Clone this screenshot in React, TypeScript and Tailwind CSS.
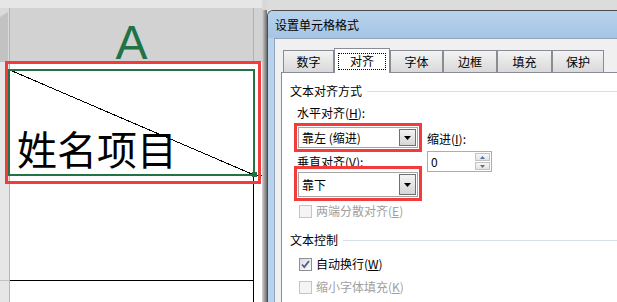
import React from "react";

const Tab = ({ label, w, active }: { label: string; w: string; active?: boolean }) =>
  active ? (
    <div className={`${w} h-[25px] bg-white border border-b-0 border-[#898c95] flex items-center justify-center`}>
      <span className="w-[48px] h-[17px] border border-dotted border-black flex items-center justify-center">{label}</span>
    </div>
  ) : (
    <div className={`${w} h-[23px] border border-[#898c95] bg-gradient-to-b from-[#f3f3f3] to-[#d9d9d9] flex items-center justify-center`}>
      {label}
    </div>
  );

const GroupHeader = ({ text, className }: { text: string; className?: string }) => (
  <div className={`flex items-center gap-[5px] ${className ?? ""}`}>
    <span>{text}</span>
    <div className="flex-1 h-px bg-[#d5dfe5]" />
  </div>
);

const DropButton = () => (
  <div className="w-[17px] h-full border border-[#707070] bg-gradient-to-b from-[#f4f4f4] to-[#d6d6d6] flex items-center justify-center">
    <svg width="7" height="4" viewBox="0 0 7 4">
      <path d="M0 0h7L3.5 4z" fill="#000" />
    </svg>
  </div>
);

const Select = ({ text, h }: { text: string; h: string }) => (
  <div className={`${h} bg-white border border-[#a5a5a5] flex items-center`}>
    <span className="flex-1 pl-[3px]">{text}</span>
    <div className="h-full py-px pr-px">
      <DropButton />
    </div>
  </div>
);

const Check = ({ checked, disabled }: { checked?: boolean; disabled?: boolean }) => (
  <div
    className={`w-[13px] h-[13px] shrink-0 border flex items-center justify-center ${
      disabled ? "border-[#c5c5c5] bg-[#f4f4f4]" : "border-[#8e8f8f] bg-gradient-to-br from-[#dedede] to-[#fafafa]"
    }`}
  >
    {checked && (
      <svg width="11" height="11" viewBox="0 0 11 11">
        <path d="M2 5.5 L4.3 8 L9 2" fill="none" stroke="#4a5d95" strokeWidth="1.8" />
      </svg>
    )}
  </div>
);

const SpinBtn = ({ up }: { up?: boolean }) => (
  <div className="flex-1 border border-[#c3c3c3] bg-gradient-to-b from-[#f7f7f7] to-[#e3e3e3] flex items-center justify-center">
    <svg width="5" height="3" viewBox="0 0 5 3">
      <path d={up ? "M0 3h5L2.5 0z" : "M0 0h5L2.5 3z"} fill="#5b6f9b" />
    </svg>
  </div>
);

export default function App() {
  return (
    <div className="w-[617px] h-[302px] overflow-hidden flex bg-[#e6e6e6] text-black font-[family-name:'Noto_Sans_CJK_SC',sans-serif]">
      {/* sheet */}
      <div className="w-[262px] shrink-0 flex flex-col relative">
        <div className="h-[8px] bg-[#e6e6e6]" />
        <div className="h-[54px] flex">
          <div className="w-[9px] bg-[#dadada]">
            <svg width="9" height="54" viewBox="0 0 9 54">
              <polygon points="0,9 8,4 8,54 0,54" fill="#c2c2c2" />
            </svg>
          </div>
          <div className="w-px bg-[#b5b5b5]" />
          <div className="w-[244px] bg-[#d2d2d2] border-r border-[#b0b0b0] flex justify-center">
            <span className="pt-[20px] text-[48px] leading-[30px] text-[#217346] font-[family-name:'Liberation_Sans',sans-serif]">
              A
            </span>
          </div>
          <div className="flex-1 bg-[#d2d2d2]" />
        </div>
        <div className="flex-1 flex">
          <div className="w-[9px] bg-[#e6e6e6]">
            <div className="h-[219px] border-b border-[#c2c2c2]" />
          </div>
          <div className="w-px bg-[#b5b5b5]" />
          <div className="flex-1 bg-white flex flex-col">
            <div className="h-[114px] border-b border-black flex">
              <div className="w-[244px] relative flex flex-col justify-end pl-[7px] pb-[7px]">
                <svg className="absolute inset-0" width="244" height="113" viewBox="0 0 244 113" shapeRendering="crispEdges">
                  <line x1="1" y1="8.5" x2="243" y2="112.5" stroke="#000" strokeWidth="1" />
                </svg>
                <span className="relative text-[40px] leading-[40px]">姓名项目</span>
              </div>
            </div>
            <div className="w-[244px] h-[105px] border-r border-b border-black" />
            <div className="w-[244px] flex-1 border-r border-black" />
          </div>
        </div>
        {/* selection + annotation */}
        <div className="absolute left-[8px] top-[69px] w-[247px] h-[107px] border-2 border-[#217346]" />
        <div className="absolute left-[252px] top-[172px] w-[5px] h-[5px] bg-[#217346]" />
        <div className="absolute left-[5px] top-[61px] w-[256px] h-[123px] border-[3px] border-[#f23b3b]" />
      </div>

      {/* shadow */}
      <div className="w-[5px] shrink-0 flex flex-col">
        <div className="h-[10px] bg-[#d8d8d8]" />
        <div className="flex-1 bg-gradient-to-r from-[#d4d4d4] to-[#6c6c6c]" />
      </div>

      {/* dialog */}
      <div className="flex-1 flex flex-col">
        <div className="h-[10px] bg-[#dcdcdc]" />
        <div className="flex-1 flex flex-col border-l border-t border-[#4b4b4b] rounded-tl-[6px] overflow-hidden bg-[#b9d3ee] text-[12px] leading-[16px]">
          <div className="h-[27px] shrink-0 bg-gradient-to-b from-[#b8d2ec] to-[#a5c5e5] flex items-center pl-[7px]">
            设置单元格格式
          </div>
          <div className="flex-1 flex pl-[6px]">
            <div className="flex-1 flex flex-col bg-[#f0f0f0] border-l border-t border-[#8fa3ba] pl-[6px] pt-[9px]">
              <div className="flex items-end ml-[2px] -mb-px relative z-10">
                <Tab label="数字" w="w-[51px]" />
                <Tab label="对齐" w="w-[56px]" active />
                <Tab label="字体" w="w-[53px]" />
                <Tab label="边框" w="w-[54px]" />
                <Tab label="填充" w="w-[55px]" />
                <Tab label="保护" w="w-[52px]" />
              </div>
              <div className="flex-1 bg-white border-l border-t border-[#898c95] pl-[8px] pt-[10px]">
                <GroupHeader text="文本对齐方式" />
                <div className="flex pl-[4px] mt-[6px]">
                  <div className="w-[128px] flex flex-col">
                    <div className="pl-[3px]">
                      水平对齐(<span className="underline">H</span>):
                    </div>
                    <div className="mt-[2px] border-[3px] border-[#f23b3b] p-px">
                      <Select text="靠左 (缩进)" h="h-[21px]" />
                    </div>
                    <div className="pl-[3px] mt-[2px]">
                      垂直对齐(<span className="underline">V</span>):
                    </div>
                    <div className="-mt-[4px] border-[3px] border-[#f23b3b] pt-[3px] px-px pb-px relative">
                      <Select text="靠下" h="h-[25px]" />
                    </div>
                    <div className="mt-[2px] flex items-center pl-[5px] gap-[4px] text-[#a0a0a0]">
                      <Check disabled />
                      <span>
                        两端分散对齐(<span className="underline">E</span>)
                      </span>
                    </div>
                  </div>
                  <div className="ml-[5px] pt-[26px]">
                    <div>
                      缩进(<span className="underline">I</span>):
                    </div>
                    <div className="mt-[4px] w-[65px] h-[21px] bg-white border border-[#abadb3] flex">
                      <span className="flex-1 pl-[3px] flex items-center">0</span>
                      <div className="w-[16px] flex flex-col gap-px py-px pr-px">
                        <SpinBtn up />
                        <SpinBtn />
                      </div>
                    </div>
                  </div>
                </div>
                <GroupHeader text="文本控制" className="mt-[13px]" />
                <div className="mt-[8px] flex items-center pl-[9px] gap-[4px]">
                  <Check checked />
                  <span>
                    自动换行(<span className="underline">W</span>)
                  </span>
                </div>
                <div className="mt-[7px] flex items-center pl-[9px] gap-[4px] text-[#a0a0a0]">
                  <Check disabled />
                  <span>
                    缩小字体填充(<span className="underline">K</span>)
                  </span>
                </div>
              </div>
            </div>
          </div>
        </div>
      </div>
    </div>
  );
}
